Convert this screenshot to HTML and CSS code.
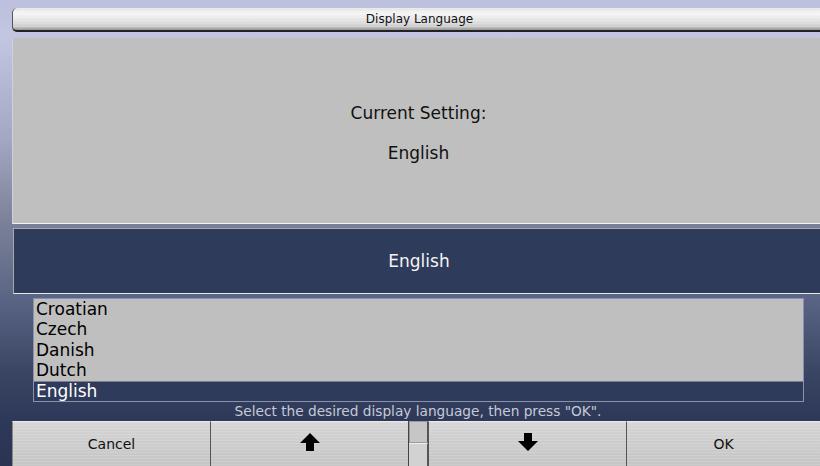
FILE: index.html
```html
<!DOCTYPE html>
<html>
<head>
<meta charset="utf-8">
<title>Display Language</title>
<link rel="stylesheet" href="styles.css">
</head>
<body>
<div class="screen">
  <div class="titlebar">Display Language</div>

  <div class="current">
    <div class="current-label">Current Setting:</div>
    <div class="current-value">English</div>
  </div>

  <div class="selection">English</div>

  <div class="list-wrap">
    <ul class="list">
      <li>Croatian</li>
      <li>Czech</li>
      <li>Danish</li>
      <li>Dutch</li>
      <li class="selected">English</li>
    </ul>
  </div>

  <div class="hint">Select the desired display language, then press "OK".</div>

  <div class="buttons">
    <div class="btn btn-cancel">Cancel</div>
    <div class="btn btn-up">
      <svg width="20" height="18" viewBox="0 0 20 18"><path d="M10 0 L20 10 L14 10 L14 18 L6 18 L6 10 L0 10 Z" fill="#000"/></svg>
    </div>
    <div class="scroller">
      <div class="scroller-top"></div>
      <div class="scroller-bottom"></div>
    </div>
    <div class="btn btn-down">
      <svg width="20" height="18" viewBox="0 0 20 18"><path d="M6 0 L14 0 L14 8 L20 8 L10 18 L0 8 L6 8 Z" fill="#000"/></svg>
    </div>
    <div class="btn btn-ok">OK</div>
  </div>
</div>
</body>
</html>
```

FILE: styles.css
```css
html, body {
  margin: 0;
  padding: 0;
}

body {
  width: 820px;
  height: 466px;
  overflow: hidden;
  font-family: "DejaVu Sans", Verdana, sans-serif;
}

.screen {
  width: 820px;
  height: 466px;
  display: flex;
  flex-direction: column;
  background: linear-gradient(to bottom,
    #bcc0dc 0%,
    #c2c6e0 8%,
    #a3a8c2 30%,
    #7a8098 48%,
    #5a6585 64%,
    #3a4564 80%,
    #2e3959 90%,
    #2a3453 100%);
}

/* brushed metal title strip */
.titlebar {
  margin: 8px 0 0 12px;
  height: 22px;
  padding-left: 6px;
  border-radius: 5px 0 0 5px;
  border-left: 1px solid #555;
  border-bottom: 2px solid #222;
  background:
    repeating-linear-gradient(to bottom, rgba(255,255,255,0.05) 0 1px, rgba(0,0,0,0.015) 1px 3px),
    linear-gradient(to bottom, #e8e8e8 0%, #f8f8f8 25%, #e4e4e4 60%, #cfcfcf 85%, #8e8e8e 100%);
  font-size: 12px;
  color: #111;
  text-align: center;
  line-height: 22px;
}

.current {
  margin: 6px 0 0 12px;
  height: 186px;
  background: #bfbfbf;
  border-left: 1px solid #d0d0d8;
  border-bottom: 1px solid #f2f2f2;
  display: flex;
  flex-direction: column;
  align-items: center;
  justify-content: center;
  gap: 20px;
  padding: 4px 0 0 4px;
  box-sizing: border-box;
  font-size: 17px;
  color: #111;
}

.current-label,
.current-value {
  line-height: 20px;
}

.selection {
  margin: 4px 0 0 13px;
  height: 64px;
  padding-left: 4px;
  background: #2e3b5a;
  border: 1px solid #a8a8a8;
  border-right: none;
  border-bottom-color: #e8e8e8;
  color: #f4f4f4;
  font-size: 17px;
  display: flex;
  align-items: center;
  justify-content: center;
}

.list-wrap {
  margin: 4px 0 0 33px;
  width: 771px;
}

.list {
  list-style: none;
  margin: 0;
  padding: 0;
  background: #bfbfbf;
  border: 1px solid #8a92aa;
}

.list li {
  height: 20.4px;
  line-height: 20px;
  padding-left: 2px;
  font-size: 17px;
  color: #000;
  white-space: nowrap;
}

.list li.selected {
  background: #2e3b5a;
  color: #fff;
  border-top: 1px solid #7a7f90;
  height: 19.4px;
  line-height: 18px;
}

.hint {
  height: 19px;
  line-height: 19px;
  text-align: center;
  padding-left: 16px;
  font-size: 13.7px;
  color: #c6cad6;
}

.buttons {
  display: flex;
  margin-left: 12px;
  height: 45px;
}

.btn {
  height: 45px;
  box-sizing: border-box;
  border-top: 1px solid #eaeaea;
  border-left: 1px solid #555;
  background:
    repeating-linear-gradient(to bottom, rgba(255,255,255,0.06) 0 1px, rgba(0,0,0,0.02) 1px 3px),
    linear-gradient(to bottom, #dadada 0%, #d2d2d2 40%, #c9c9c9 100%);
  display: flex;
  align-items: center;
  justify-content: center;
  font-size: 14px;
  color: #111;
}

.btn-cancel {
  width: 198px;
  border-left: 1px solid #888;
}

.btn-up {
  width: 198px;
}

.btn-down {
  width: 198px;
}

.btn-ok {
  flex: 1;
}

.btn svg {
  margin-top: -3px;
}

.scroller {
  width: 20px;
  display: flex;
  flex-direction: column;
  border-left: 1px solid #444;
  box-sizing: border-box;
}

.scroller-top {
  height: 22px;
  background: #c6c6c6;
  border: 1px solid #9a9a9a;
  border-right: 1px solid #555;
  box-sizing: border-box;
}

.scroller-bottom {
  flex: 1;
  background: #d2d2d2;
  border-top: 1px solid #f0f0f0;
  border-right: 1px solid #555;
}
```
